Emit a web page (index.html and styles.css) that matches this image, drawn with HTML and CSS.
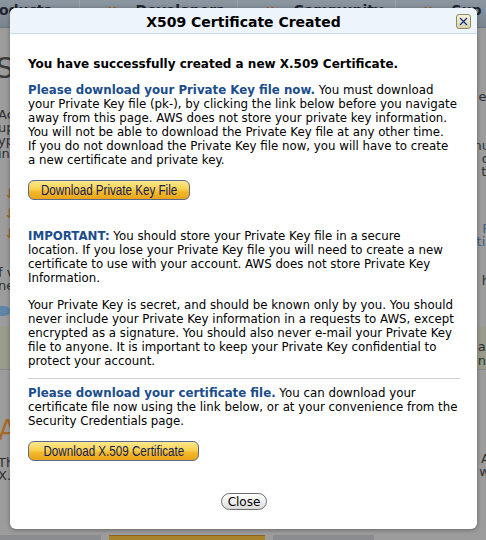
FILE: index.html
```html
<!DOCTYPE html>
<html>
<head>
<meta charset="utf-8">
<link rel="stylesheet" href="styles.css">
</head>
<body>
<div class="page">
  <div class="nav">
    <div class="nav-item first">roducts</div>
    <div class="nav-item"><span class="sep">ll</span>Developers</div>
    <div class="nav-item"><span class="sep">ll</span>Community</div>
    <div class="nav-item"><span class="sep">ll</span>Sup</div>
  </div>
  <div class="bg-body">
    <div class="bg-cols">
      <div class="bg-left">
        <div class="big">S</div>
        <div class="small-lines">Ac<br>up<br>yp<br>in</div>
        <div class="arrows">↓<br>↓<br>↓</div>
        <div class="small-lines">f v<br>ne</div>
        <div class="bubble"></div>
      </div>
      <div class="bg-right">
        <div class="small-lines r1">el</div>
        <div class="small-lines r2">nu<br>d<br>ti</div>
        <div class="small-lines r3">P<br>ti-</div>
        <div class="small-lines r4">h</div>
      </div>
    </div>
    <div class="band"><span class="band-r">a<br>n</span></div>
    <div class="bg-lower">
      <div class="bg-left">
        <div class="big orange">A</div>
        <div class="small-lines">Th<br>X.5</div>
      </div>
      <div class="bg-right">
        <div class="small-lines r5">A<br>w</div>
      </div>
    </div>
    <div class="tabs">
      <div class="tab grey"></div>
      <div class="tab gold"></div>
      <div class="tab grey"></div>
    </div>
  </div>
</div>

<div class="dialog">
  <div class="dialog-title">
    <span>X509 Certificate Created</span>
    <button class="x-btn" aria-label="close">
      <svg width="9" height="9" viewBox="0 0 9 9"><path d="M1 1L8 8M8 1L1 8" stroke="#1a2a8a" stroke-width="1.2" fill="none"/></svg>
    </button>
  </div>
  <div class="dialog-body">
    <p class="lead">You have successfully created a new X.509 Certificate.</p>
    <p class="para first-para"><b class="blue">Please download your Private Key file now.</b> You must download<br>your Private Key file (pk-), by clicking the link below before you navigate<br>away from this page. AWS does not store your private key information.<br>You will not be able to download the Private Key file at any other time.<br>If you do not download the Private Key file now, you will have to create<br>a new certificate and private key.</p>
    <button class="gold-btn btn-key"><span>Download Private Key File</span></button>
    <p class="para important"><b class="blue">IMPORTANT:</b> You should store your Private Key file in a secure<br>location. If you lose your Private Key file you will need to create a new<br>certificate to use with your account. AWS does not store Private Key<br>Information.</p>
    <p class="para secret">Your Private Key is secret, and should be known only by you. You should<br>never include your Private Key information in a requests to AWS, except<br>encrypted as a signature. You should also never e-mail your Private Key<br>file to anyone. It is important to keep your Private Key confidential to<br>protect your account.</p>
    <hr class="divider">
    <p class="para cert"><b class="blue">Please download your certificate file.</b> You can download your<br>certificate file now using the link below, or at your convenience from the<br>Security Credentials page.</p>
    <button class="gold-btn btn-cert"><span>Download X.509 Certificate</span></button>
    <div class="close-row"><button class="close-btn">Close</button></div>
  </div>
</div>
</body>
</html>
```

FILE: styles.css
```css
* { box-sizing: border-box; }
html, body { margin: 0; padding: 0; }
body {
  width: 486px;
  height: 540px;
  overflow: hidden;
  background: #9a9a9a;
  font-family: "DejaVu Sans", Verdana, sans-serif;
}
.page {
  width: 486px;
  height: 540px;
  display: flex;
  flex-direction: column;
  color: #3a3a3a;
  overflow: hidden;
}
.nav {
  height: 28px;
  display: flex;
  background: linear-gradient(#8c96a0, #7a848e);
  border-bottom: 1px solid #6e7780;
}
.nav-item {
  flex: 0 0 158px;
  font: bold 14px "DejaVu Sans", sans-serif;
  color: #1e2530;
  padding-top: 2px;
  padding-left: 28px;
  white-space: nowrap;
  overflow: hidden;
  border-left: 1px solid #9aa3ac;
}
.nav-item.first { flex-basis: 87px; padding-left: 0; margin-left: -8px; border-left: none; }
.nav-item .sep { color: #a0621a; margin-right: 18px; font-size: 11px; letter-spacing: 1px; }
.bg-body { flex: 1; display: flex; flex-direction: column; background: #9c9c9c; }
.bg-cols { display: flex; justify-content: space-between; height: 298px; }
.bg-left { width: 40px; padding-top: 24px; }
.bg-right { width: 40px; text-align: right; }
.big { font: 28px "DejaVu Sans", sans-serif; color: #3b3b3b; margin-left: -4px; line-height: 34px; }
.big.orange { color: #a86a28; margin-left: -2px; }
.small-lines { font: 13px "DejaVu Sans", sans-serif; line-height: 13px; color: #2f2f2f; margin-top: 22px; margin-left: -2px; }
.arrows { color: #a0621a; font-size: 13px; line-height: 20px; margin-top: 24px; margin-left: 4px; }
.bubble { width: 14px; height: 10px; background: #5f86a8; border-radius: 6px; margin: 14px 0 0 -4px; }
.bg-right .small-lines { margin-left: 0; margin-right: -4px; }
.r1 { margin-top: 62px; }
.r2 { margin-top: 36px !important; }
.r3 { margin-top: 44px !important; color: #44607a !important; }
.r4 { margin-top: 26px !important; }
.band { height: 44px; background: #9a9b8c; border-bottom: 1px solid #8a8a8a; position: relative; margin-bottom: 8px; }
.band-r { position: absolute; right: 0; top: 14px; font-size: 13px; line-height: 14px; color: #2f2f2f; }
.bg-lower { flex: 1; display: flex; justify-content: space-between; }
.bg-lower .bg-left { padding-top: 36px; }
.bg-lower .small-lines { margin-top: 8px; }
.r5 { margin-top: 74px !important; }
.tabs { height: 10px; display: flex; gap: 8px; align-items: flex-end; }
.tab { height: 5px; }
.tab.grey { width: 101px; background: #8a8c90; }
.tab.gold { width: 156px; background: #a7832e; border-top: 1px solid #8a6420; }

/* dialog */
.dialog {
  position: absolute;
  left: 10px;
  top: 8px;
  width: 467px;
  height: 521px;
  background: #fff;
  border-radius: 6px;
  box-shadow: 0 1px 4px rgba(0,0,0,0.35);
  overflow: hidden;
  color: #000;
}
.dialog-title {
  height: 26px;
  background: #eef4fb;
  border-bottom: 1px solid #c6dcef;
  display: flex;
  align-items: center;
  justify-content: center;
  position: relative;
  font: bold 14px "DejaVu Sans", Verdana, sans-serif;
  padding-top: 2px;
}
.x-btn {
  position: absolute;
  right: 6px;
  top: 6px;
  width: 15px;
  height: 15px;
  padding: 0;
  border: 1px solid #8c8a5e;
  border-radius: 3px;
  background: linear-gradient(#f6f3dc, #d9d4ac);
  display: flex;
  align-items: center;
  justify-content: center;
}
.dialog-body {
  padding: 23px 17px 0 18px;
  font-size: 11.8px;
  line-height: 14px;
}
.dialog-body p { margin: 0; white-space: nowrap; }
.lead { font-weight: bold; font-size: 12px; }
.blue { color: #1b4d8c; }
.first-para { margin-top: 12px !important; }
.gold-btn {
  display: flex;
  align-items: center;
  justify-content: center;
  margin-top: 13px;
  height: 20px;
  padding: 0;
  border: 1px solid #5b6a8c;
  border-radius: 6px;
  background: linear-gradient(#fde98f 0%, #f9d150 45%, #f2b82a 60%, #e9a51c 100%);
  font: 14px "Liberation Sans", Arial, sans-serif;
  color: #121c5c;
  overflow: hidden;
}
.gold-btn span { display: inline-block; white-space: nowrap; transform: scaleX(0.83); }
.btn-key { width: 162px; }
.btn-cert { width: 171px; }
.important { margin-top: 29px !important; }
.secret { margin-top: 13px !important; }
.divider { margin: 10px 0 0 0; border: none; border-top: 1px solid #d0d0d0; height: 0; }
.cert { margin-top: 7px !important; }
.close-row { display: flex; justify-content: center; margin-top: 32px; }
.close-btn {
  height: 17px;
  width: 46px;
  padding: 0;
  border: 1px solid #6e6e6e;
  border-radius: 9px;
  background: linear-gradient(#ffffff, #ececec 60%, #dadada);
  font: 12px "DejaVu Sans", Verdana, sans-serif;
  color: #000;
  line-height: 14px;
}
```
